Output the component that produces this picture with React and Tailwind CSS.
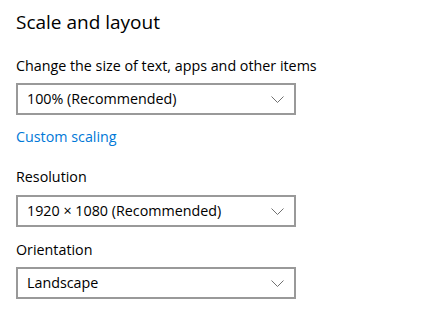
import React from "react";

function Chevron() {
  return (
    <svg width="13" height="7" viewBox="0 0 13 7" className="shrink-0">
      <path d="M0.5 0.5 L6.5 6.5 L12.5 0.5" fill="none" stroke="#707070" strokeWidth="1" />
    </svg>
  );
}

function Select({ value }) {
  return (
    <div className="flex h-[32px] w-[280px] items-center justify-between border-2 border-[#999999] bg-white pl-[9px] pr-[10px]">
      <span className="text-[14.3px] leading-[20px] text-black">{value}</span>
      <Chevron />
    </div>
  );
}

export default function App() {
  return (
    <div
      className="h-[319px] w-[440px] bg-white pl-4 pt-2 text-black"
      style={{ fontFamily: '"Open Sans", "Noto Sans", sans-serif' }}
    >
      <h1 className="text-[19px] leading-[28px] font-normal">Scale and layout</h1>
      <div className="mt-[20px] text-[14.3px] leading-[20px]">Change the size of text, apps and other items</div>
      <div className="mt-[7px]">
        <Select value="100% (Recommended)" />
      </div>
      <div className="mt-[12px] text-[14.3px] leading-[20px] text-[#0078d7]">Custom scaling</div>
      <div className="mt-[20px] text-[14.3px] leading-[20px]">Resolution</div>
      <div className="mt-[8px]">
        <Select value="1920 × 1080 (Recommended)" />
      </div>
      <div className="mt-[13px] text-[14.3px] leading-[20px]">Orientation</div>
      <div className="mt-[7px]">
        <Select value="Landscape" />
      </div>
    </div>
  );
}
